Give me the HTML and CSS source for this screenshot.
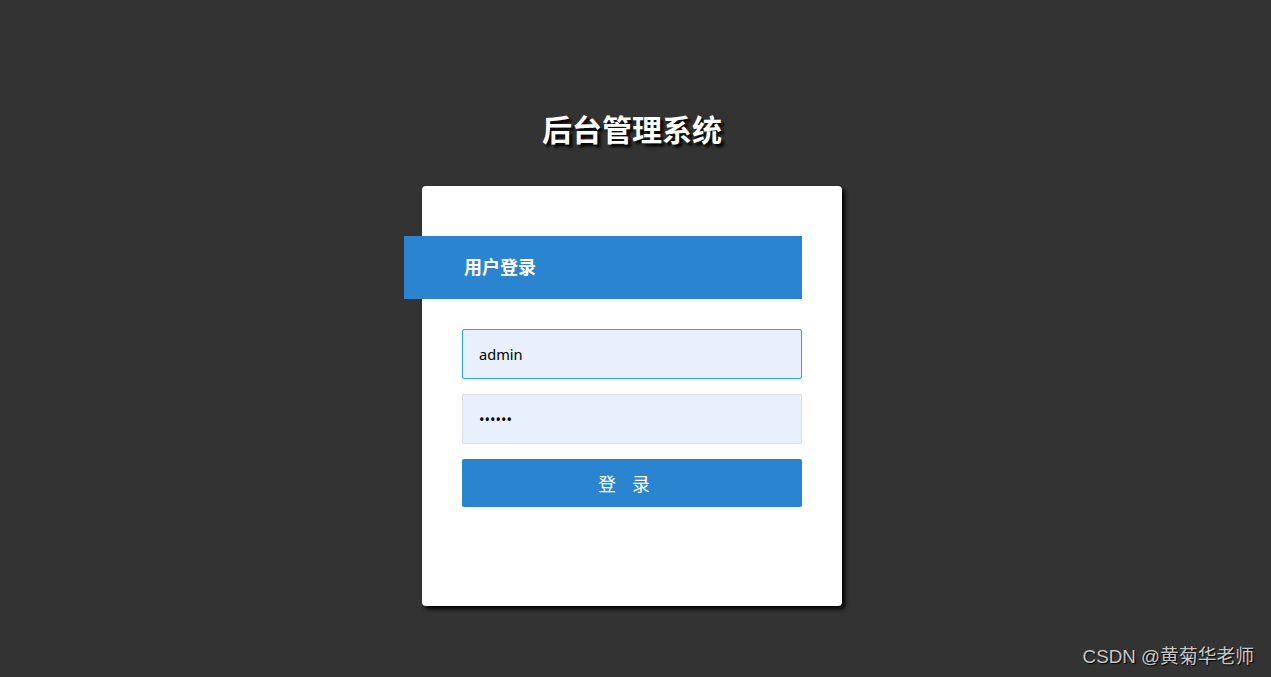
FILE: index.html
```html
<!DOCTYPE html>
<html lang="zh-CN">
<head>
<meta charset="utf-8">
<title>后台管理系统</title>
<link rel="stylesheet" href="styles.css">
</head>
<body>
<div class="page">
  <h1 class="title">后台管理系统</h1>
  <div class="card">
    <div class="banner">用户登录</div>
    <form class="form">
      <input class="field field-focus" type="text" value="admin">
      <input class="field" type="password" value="123456">
      <button class="btn" type="button">登录</button>
    </form>
  </div>
</div>
<div class="watermark">CSDN @黄菊华老师</div>
</body>
</html>
```

FILE: styles.css
```css
html, body {
  margin: 0;
  padding: 0;
  height: 100%;
  background: #333333;
  font-family: "Noto Sans CJK SC", "Noto Sans", sans-serif;
  overflow: hidden;
}

.page {
  display: flex;
  flex-direction: column;
  align-items: center;
  padding-right: 7px;
  padding-top: 106px;
}

.title {
  margin: 0;
  color: #ffffff;
  font-size: 30px;
  font-weight: 700;
  line-height: 44px;
  text-shadow: 3px 3px 3px #000000;
}

.card {
  margin-top: 36px;
  width: 420px;
  height: 420px;
  box-sizing: border-box;
  background: #ffffff;
  border-radius: 4px;
  box-shadow: 3px 3px 4px #000000;
  padding: 50px 40px 0 40px;
}

.banner {
  margin-left: -58px;
  height: 63px;
  box-sizing: border-box;
  display: flex;
  align-items: center;
  padding-left: 60px;
  padding-bottom: 3px;
  background: #2a84d0;
  color: #ffffff;
  font-size: 18px;
  font-weight: 700;
}

.form {
  display: flex;
  flex-direction: column;
  margin-top: 30px;
}

.field {
  height: 50px;
  box-sizing: border-box;
  border: 1px solid #dadde1;
  border-radius: 2px;
  background: #e8f0fe;
  padding: 0 16px;
  font-family: "Noto Sans", "Noto Sans CJK SC", sans-serif;
  font-size: 14.6px;
  color: #000000;
  outline: none;
  margin: 0 0 15px 0;
}

.field-focus {
  border-color: #2ba4e4;
}

.btn {
  height: 48px;
  border: none;
  border-radius: 2px;
  background: #2a84d0;
  color: #ffffff;
  font-family: "Noto Sans CJK SC", sans-serif;
  font-size: 18px;
  letter-spacing: 16px;
  padding: 0;
  cursor: pointer;
}

.watermark {
  position: absolute;
  right: 17px;
  bottom: 9px;
  color: #c8c8c8;
  font-family: "Liberation Sans", "Noto Sans CJK SC", sans-serif;
  font-size: 18.8px;
  text-shadow: 1px 1px 1px #000000;
}
```
